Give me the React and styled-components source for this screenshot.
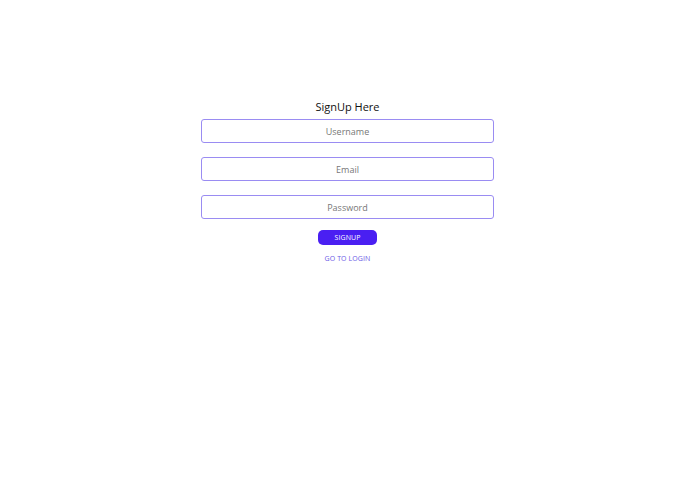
import React from "react";
import styled, { createGlobalStyle } from "styled-components";

const GlobalStyle = createGlobalStyle`
  body {
    margin: 0;
    background: #ffffff;
    font-family: "Open Sans", "Noto Sans", sans-serif;
  }
`;

const Page = styled.div`
  display: flex;
  flex-direction: column;
  align-items: center;
  padding-top: 99px;
`;

const Title = styled.h2`
  margin: 0 0 4px;
  font-size: 11px;
  font-weight: 400;
  line-height: 16px;
  color: #111;
`;

const Form = styled.form`
  width: 293px;
  display: flex;
  flex-direction: column;
  align-items: center;
  gap: 14px;
`;

const Input = styled.input`
  width: 100%;
  height: 24px;
  box-sizing: border-box;
  border: 1px solid #9a8cf2;
  border-radius: 3px;
  text-align: center;
  font-family: "Open Sans", "Noto Sans", sans-serif;
  font-size: 9px;
  color: #333;
  outline: none;

  &::placeholder {
    color: #777;
  }
`;

const Button = styled.button`
  margin-top: -3px;
  width: 59px;
  height: 15px;
  padding: 0;
  border: none;
  border-radius: 5px;
  background: #4a1ff2;
  color: #fff;
  font-family: "Open Sans", "Noto Sans", sans-serif;
  font-size: 7px;
  letter-spacing: 0.1px;
  cursor: pointer;
`;

const LoginLink = styled.a`
  margin-top: 9px;
  font-size: 7px;
  letter-spacing: 0.1px;
  color: #6a5ae6;
  text-decoration: none;
  cursor: pointer;
`;

export default function App() {
  return (
    <>
      <GlobalStyle />
      <Page>
        <Title>SignUp Here</Title>
        <Form onSubmit={(e) => e.preventDefault()}>
          <Input type="text" placeholder="Username" />
          <Input type="email" placeholder="Email" />
          <Input type="password" placeholder="Password" />
          <Button type="submit">SIGNUP</Button>
        </Form>
        <LoginLink>GO TO LOGIN</LoginLink>
      </Page>
    </>
  );
}
